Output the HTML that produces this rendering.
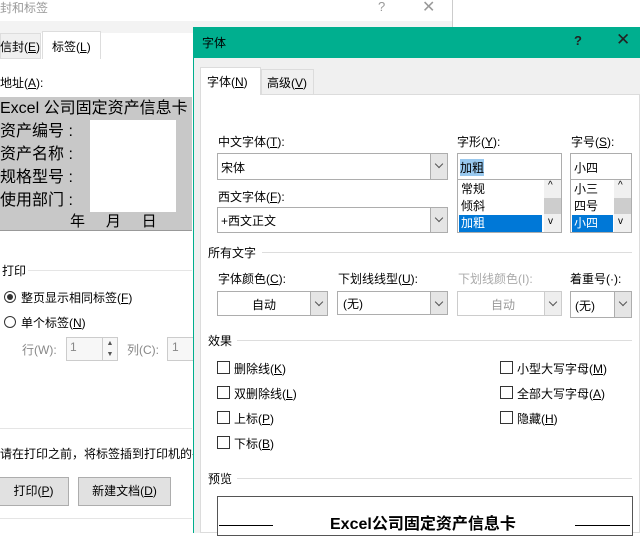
<!DOCTYPE html>
<html><head><meta charset="utf-8"><style>
*{margin:0;padding:0;box-sizing:border-box}
body{width:640px;height:533px;overflow:hidden;background:#fff;position:relative;font-family:"Liberation Sans","Noto Sans CJK SC",sans-serif;font-size:12px;color:#000}
.a{position:absolute;white-space:nowrap}
.box{position:absolute;border:1px solid #adadad;background:#fff}
.dd{position:absolute;top:0;right:0;bottom:0;width:17px;background:#e5e5e5;border-left:1px solid #adadad}
.dd:after{content:"";position:absolute;left:5px;top:7px;width:5px;height:5px;border-right:1px solid #555;border-bottom:1px solid #555;transform:rotate(45deg)}
.cb{position:absolute;width:13px;height:13px;border:1px solid #333;background:#fff}
.ln{position:absolute;height:1px;background:#ddd}
.gr{color:#888}
.sb{position:absolute;width:17px;background:#f0f0f0}
</style></head><body>
<div class="a" style="left:0;top:0;width:453px;height:533px;background:#fff;border-right:1px solid #ccc"></div>
<div class="a gr" style="left:0;top:-1px;font-size:12px;color:#999">封和标签</div>
<div class="a" style="left:378px;top:-1px;color:#999;font-size:13px">?</div>
<div class="a" style="left:422px;top:-3px;color:#999;font-size:16px">✕</div>
<div class="a" style="left:0;top:21px;width:452px;height:12px;background:#f3f3f3"></div>
<div class="a" style="left:0;top:33px;width:41px;height:26px;background:#f0f0f0;border:1px solid #ddd"></div>
<div class="a" style="left:0;top:38px">信封(<u>E</u>)</div>
<div class="a" style="left:42px;top:31px;width:59px;height:28px;background:#fff;border:1px solid #ddd;border-bottom:none"></div>
<div class="a" style="left:52px;top:38px">标签(<u>L</u>)</div>
<div class="a" style="left:0;top:74px">地址(<u>A</u>):</div>
<div class="a" style="left:0;top:97px;width:192px;height:134px;background:#c8c8c8;border-bottom:1px solid #999"></div>
<div class="a" style="left:90px;top:120px;width:86px;height:92px;background:#fff"></div>
<div class="a" style="left:0;top:97px;font-size:16px;line-height:23px">Excel 公司固定资产信息卡</div>
<div class="a" style="left:0;top:120px;font-size:16px;line-height:23px">资产编号 :<br>资产名称 :<br>规格型号 :<br>使用部门 :</div>
<div class="a" style="left:70px;top:212px;font-size:15px;line-height:19px">年&nbsp;&nbsp;&nbsp;&nbsp;&nbsp;月&nbsp;&nbsp;&nbsp;&nbsp;&nbsp;日</div>
<div class="a" style="left:2px;top:262px">打印</div>
<div class="ln" style="left:28px;top:270px;width:164px;background:#e5e5e5"></div>
<div class="a" style="left:4px;top:291px;width:12px;height:12px;border:1px solid #333;border-radius:50%"></div>
<div class="a" style="left:7px;top:294px;width:6px;height:6px;background:#333;border-radius:50%"></div>
<div class="a" style="left:21px;top:289px">整页显示相同标签(<u>F</u>)</div>
<div class="a" style="left:4px;top:316px;width:12px;height:12px;border:1px solid #333;border-radius:50%"></div>
<div class="a" style="left:21px;top:314px">单个标签(<u>N</u>)</div>
<div class="a gr" style="left:22px;top:341px">行(W):</div>
<div class="a" style="left:66px;top:337px;width:52px;height:24px;border:1px solid #ccc;background:#f7f7f7"></div>
<div class="a gr" style="left:70px;top:340px">1</div>
<div class="a" style="left:102px;top:338px;width:15px;height:22px;border-left:1px solid #ccc;font-size:7px;color:#555;text-align:center;line-height:11px">▲<br>▼</div>
<div class="a gr" style="left:127px;top:341px">列(C):</div>
<div class="a" style="left:167px;top:337px;width:30px;height:24px;border:1px solid #ccc;background:#f7f7f7"></div>
<div class="a gr" style="left:172px;top:340px">1</div>
<div class="ln" style="left:0;top:428px;width:192px;background:#e5e5e5"></div>
<div class="a" style="left:0;top:445px">请在打印之前，将标签插到打印机的手</div>
<div class="a" style="left:-2px;top:477px;width:71px;height:29px;background:#e1e1e1;border:1px solid #adadad;text-align:center;line-height:27px">打印(<u>P</u>)</div>
<div class="a" style="left:78px;top:477px;width:93px;height:29px;background:#e1e1e1;border:1px solid #adadad;text-align:center;line-height:27px">新建文档(<u>D</u>)</div>
<div class="ln" style="left:0;top:518px;width:192px;background:#e5e5e5"></div>

<div class="a" style="left:193px;top:27px;width:447px;height:506px;background:#f0f0f0;border-left:1px solid #00ae8e"></div>
<div class="a" style="left:193px;top:27px;width:447px;height:31px;background:#00af8f"></div>
<div class="a" style="left:202px;top:34px;font-size:12px">字体</div>
<div class="a" style="left:574px;top:33px;font-size:13px;font-weight:bold;color:#222">?</div>
<div class="a" style="left:616px;top:30px;font-size:17px;color:#222">✕</div>
<div class="a" style="left:200px;top:94px;width:440px;height:439px;background:#fff;border:1px solid #dcdcdc"></div>
<div class="a" style="left:200px;top:67px;width:61px;height:28px;background:#fff;border:1px solid #dcdcdc;border-bottom:none"></div>
<div class="a" style="left:207px;top:73px">字体(<u>N</u>)</div>
<div class="a" style="left:261px;top:69px;width:53px;height:25px;background:#f0f0f0;border:1px solid #dcdcdc;border-bottom:none"></div>
<div class="a" style="left:267px;top:74px">高级(<u>V</u>)</div>

<div class="a" style="left:218px;top:133px">中文字体(<u>T</u>):</div>
<div class="box" style="left:217px;top:153px;width:231px;height:27px"><span class="a" style="left:3px;top:5px">宋体</span><div class="dd"></div></div>
<div class="a" style="left:218px;top:188px">西文字体(<u>F</u>):</div>
<div class="box" style="left:217px;top:207px;width:231px;height:26px"><span class="a" style="left:3px;top:4px">+西文正文</span><div class="dd"></div></div>

<div class="a" style="left:457px;top:133px">字形(<u>Y</u>):</div>
<div class="box" style="left:457px;top:153px;width:105px;height:27px"><span class="a" style="left:2px;top:5px;background:#99c9ef">加粗</span></div>
<div class="box" style="left:457px;top:179px;width:105px;height:54px">
<div class="a" style="left:3px;top:1px;line-height:17px">常规<br>倾斜</div>
<div class="a" style="left:1px;top:35px;width:83px;height:17px;background:#0078d7;color:#fff;padding-left:2px;line-height:17px">加粗</div>
<div class="sb" style="left:86px;top:0;height:52px"><div class="a" style="left:0;top:18px;width:17px;height:16px;background:#cdcdcd"></div><span class="a" style="left:4px;top:0;font-size:10px">^</span><span class="a" style="left:4px;top:36px;font-size:10px">v</span></div></div>

<div class="a" style="left:571px;top:133px">字号(<u>S</u>):</div>
<div class="box" style="left:570px;top:153px;width:62px;height:27px"><span class="a" style="left:3px;top:5px">小四</span></div>
<div class="box" style="left:570px;top:179px;width:62px;height:54px">
<div class="a" style="left:3px;top:1px;line-height:17px">小三<br>四号</div>
<div class="a" style="left:1px;top:35px;width:41px;height:17px;background:#0078d7;color:#fff;padding-left:2px;line-height:17px">小四</div>
<div class="sb" style="left:43px;top:0;height:52px"><div class="a" style="left:0;top:18px;width:17px;height:16px;background:#cdcdcd"></div><span class="a" style="left:4px;top:0;font-size:10px">^</span><span class="a" style="left:4px;top:36px;font-size:10px">v</span></div></div>

<div class="a" style="left:208px;top:244px">所有文字</div>
<div class="ln" style="left:262px;top:252px;width:370px"></div>
<div class="a" style="left:218px;top:270px">字体颜色(<u>C</u>):</div>
<div class="box" style="left:217px;top:291px;width:111px;height:25px"><span class="a" style="left:34px;top:4px">自动</span><div class="dd"></div></div>
<div class="a" style="left:338px;top:270px">下划线线型(<u>U</u>):</div>
<div class="box" style="left:337px;top:291px;width:111px;height:24px"><span class="a" style="left:5px;top:3px">(无)</span><div class="dd"></div></div>
<div class="a gr" style="left:458px;top:270px;color:#aaa">下划线颜色(I):</div>
<div class="box" style="left:457px;top:291px;width:105px;height:25px;border-color:#ccc"><span class="a" style="left:33px;top:4px;color:#999">自动</span><div class="dd" style="background:#eee;border-color:#ccc"></div></div>
<div class="a" style="left:570px;top:270px">着重号(·):</div>
<div class="box" style="left:570px;top:291px;width:62px;height:27px"><span class="a" style="left:4px;top:5px">(无)</span><div class="dd"></div></div>

<div class="a" style="left:208px;top:332px">效果</div>
<div class="ln" style="left:237px;top:340px;width:395px"></div>
<div class="cb" style="left:217px;top:361px"></div><div class="a" style="left:234px;top:360px">删除线(<u>K</u>)</div>
<div class="cb" style="left:217px;top:386px"></div><div class="a" style="left:234px;top:385px">双删除线(<u>L</u>)</div>
<div class="cb" style="left:217px;top:411px"></div><div class="a" style="left:234px;top:410px">上标(<u>P</u>)</div>
<div class="cb" style="left:217px;top:436px"></div><div class="a" style="left:234px;top:435px">下标(<u>B</u>)</div>
<div class="cb" style="left:500px;top:361px"></div><div class="a" style="left:517px;top:360px">小型大写字母(<u>M</u>)</div>
<div class="cb" style="left:500px;top:386px"></div><div class="a" style="left:517px;top:385px">全部大写字母(<u>A</u>)</div>
<div class="cb" style="left:500px;top:411px"></div><div class="a" style="left:517px;top:410px">隐藏(<u>H</u>)</div>

<div class="a" style="left:208px;top:470px">预览</div>
<div class="ln" style="left:237px;top:478px;width:395px"></div>
<div class="a" style="left:217px;top:496px;width:416px;height:40px;border:1px solid #555;background:#fff"></div>
<div class="a" style="left:219px;top:525px;width:54px;height:1px;background:#000"></div>
<div class="a" style="left:575px;top:525px;width:55px;height:1px;background:#000"></div>
<div class="a" style="left:330px;top:510px;font-size:16px;font-weight:bold">Excel公司固定资产信息卡</div>
</body></html>
